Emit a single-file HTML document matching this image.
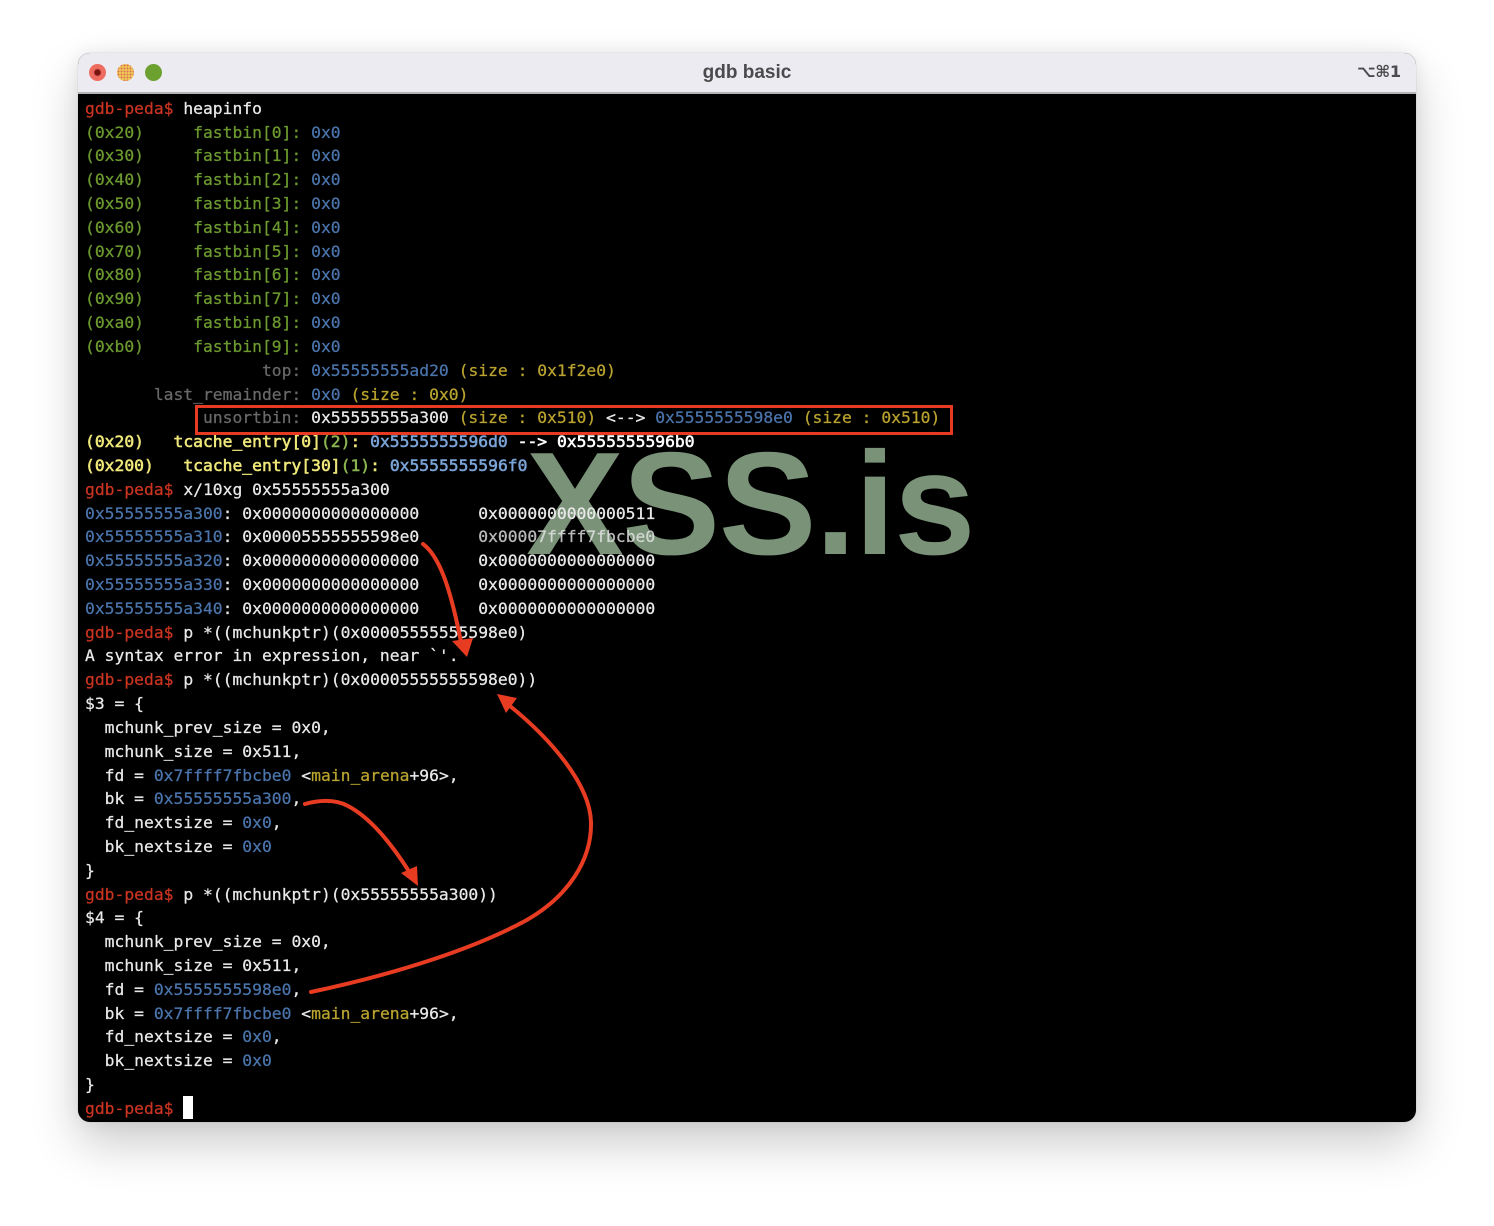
<!DOCTYPE html>
<html><head><meta charset="utf-8"><title>gdb basic</title>
<style>
html,body{margin:0;padding:0;background:#fff;width:1494px;height:1226px;overflow:hidden}
#win{position:absolute;left:78px;top:53px;width:1338px;height:1069px;border-radius:12px;box-shadow:0 22px 48px rgba(0,0,0,.2),0 0 18px rgba(0,0,0,.07),0 0 1px rgba(0,0,0,.25);background:#000;overflow:hidden}
#bar{position:absolute;left:0;top:0;width:1338px;height:39px;background:#ecebf1;border-bottom:2px solid #b4b4b4}
.l{position:absolute;border-radius:50%;width:17px;height:17px;top:11px}
#title{position:absolute;left:0;width:1338px;top:9px;text-align:center;font:bold 19px/22px "Liberation Sans",sans-serif;color:#4b4b4d}
#sc{position:absolute;left:1279px;top:8px;font:bold 16.2px/21px "DejaVu Sans",sans-serif;color:#4b4b4d;letter-spacing:-.4px;white-space:pre}
#t{position:absolute;left:85px;top:96.8px;font-family:"DejaVu Sans Mono",monospace;font-size:16.33px;line-height:23.81px;white-space:pre;color:#e9e9e9;filter:blur(.3px);-webkit-text-stroke:.25px currentColor}
.r{color:#cb3421}.g{color:#6c9a2f}.b{color:#4a74ab}.y{color:#b9a32f}.a{color:#696969}
.Y{color:#f0e87a;-webkit-text-stroke:.55px #f0e87a}.B{color:#7aa3d6;-webkit-text-stroke:.55px #7aa3d6}.G{color:#8ab452;-webkit-text-stroke:.55px #8ab452}.W{color:#fff;-webkit-text-stroke:.55px #fff}
#wm{position:absolute;left:526px;top:419px;font:bold 146.5px/170px "Liberation Sans",sans-serif;color:rgba(190,228,188,.64);white-space:pre;letter-spacing:-1.3px}
#box{position:absolute;left:195px;top:405px;width:752px;height:24px;border:3px solid #e63b22}
#cur{position:absolute;left:183px;top:1096px;width:10px;height:23px;background:#fff}
svg{position:absolute;left:0;top:0}
</style></head><body>
<div id="win">
<div id="bar">
<div class="l" style="left:11px;background:radial-gradient(circle at center,#7a1410 0,#7a1410 2.6px,#ee6b5f 4px)"></div>
<div class="l" style="left:39px;background-color:#f3d552;background-image:radial-gradient(circle,#d9715a 0,#d9715a 1px,transparent 1.2px);background-size:3px 3px"></div>
<div class="l" style="left:67px;background:#6ca02f"></div>
<div id="title">gdb basic</div>
<div id="sc">⌥⌘1</div>
</div>
</div>
<div id="wm">XSS.is</div>
<div id="t"><span class="r">gdb-peda$</span> heapinfo
<span class="g">(0x20)     fastbin[0]:</span> <span class="b">0x0</span>
<span class="g">(0x30)     fastbin[1]:</span> <span class="b">0x0</span>
<span class="g">(0x40)     fastbin[2]:</span> <span class="b">0x0</span>
<span class="g">(0x50)     fastbin[3]:</span> <span class="b">0x0</span>
<span class="g">(0x60)     fastbin[4]:</span> <span class="b">0x0</span>
<span class="g">(0x70)     fastbin[5]:</span> <span class="b">0x0</span>
<span class="g">(0x80)     fastbin[6]:</span> <span class="b">0x0</span>
<span class="g">(0x90)     fastbin[7]:</span> <span class="b">0x0</span>
<span class="g">(0xa0)     fastbin[8]:</span> <span class="b">0x0</span>
<span class="g">(0xb0)     fastbin[9]:</span> <span class="b">0x0</span>
<span class="a">                  top:</span> <span class="b">0x55555555ad20</span> <span class="y">(size : 0x1f2e0)</span>
<span class="a">       last_remainder:</span> <span class="b">0x0</span> <span class="y">(size : 0x0)</span>
<span class="a">            unsortbin:</span> 0x55555555a300 <span class="y">(size : 0x510)</span> &lt;--&gt; <span class="b">0x5555555598e0</span> <span class="y">(size : 0x510)</span>
<span class="Y">(0x20)</span>   <span class="Y">tcache_entry[0]</span><span class="G">(2)</span><span class="Y">:</span> <span class="B">0x5555555596d0</span> <span class="W">--&gt;</span> <span class="W">0x5555555596b0</span>
<span class="Y">(0x200)</span>   <span class="Y">tcache_entry[30]</span><span class="G">(1)</span><span class="Y">:</span> <span class="B">0x5555555596f0</span>
<span class="r">gdb-peda$</span> x/10xg 0x55555555a300
<span class="b">0x55555555a300</span>: 0x0000000000000000      0x0000000000000511
<span class="b">0x55555555a310</span>: 0x00005555555598e0      <span style="opacity:.8">0x00007ffff7fbcbe0</span>
<span class="b">0x55555555a320</span>: 0x0000000000000000      0x0000000000000000
<span class="b">0x55555555a330</span>: 0x0000000000000000      0x0000000000000000
<span class="b">0x55555555a340</span>: 0x0000000000000000      0x0000000000000000
<span class="r">gdb-peda$</span> p *((mchunkptr)(0x00005555555598e0)
A syntax error in expression, near `'.
<span class="r">gdb-peda$</span> p *((mchunkptr)(0x00005555555598e0))
$3 = {
  mchunk_prev_size = 0x0,
  mchunk_size = 0x511,
  fd = <span class="b">0x7ffff7fbcbe0</span> &lt;<span class="y">main_arena</span>+96&gt;,
  bk = <span class="b">0x55555555a300</span>,
  fd_nextsize = <span class="b">0x0</span>,
  bk_nextsize = <span class="b">0x0</span>
}
<span class="r">gdb-peda$</span> p *((mchunkptr)(0x55555555a300))
$4 = {
  mchunk_prev_size = 0x0,
  mchunk_size = 0x511,
  fd = <span class="b">0x5555555598e0</span>,
  bk = <span class="b">0x7ffff7fbcbe0</span> &lt;<span class="y">main_arena</span>+96&gt;,
  fd_nextsize = <span class="b">0x0</span>,
  bk_nextsize = <span class="b">0x0</span>
}
<span class="r">gdb-peda$</span></div>
<div id="cur"></div>
<div id="box"></div>
<svg width="1494" height="1226" viewBox="0 0 1494 1226" fill="none">
<g stroke="#e83c22" stroke-width="4" stroke-linecap="round">
<path d="M423 544C439 556 450 586 461 642"/>
<path d="M305 804C320 800 335 799 348 806C371 818 393 846 410 873"/>
<path d="M311 992C400 973 475 948 525 921C568 897 592 860 591 822C590 785 552 740 510 706"/>
</g>
<g fill="#e83c22">
<path d="M467 657L452 641L473 638Z"/>
<path d="M418 886L401 873L417 866Z"/>
<path d="M497 694L517 698L506 713Z"/>
</g>
</svg>
</body></html>
